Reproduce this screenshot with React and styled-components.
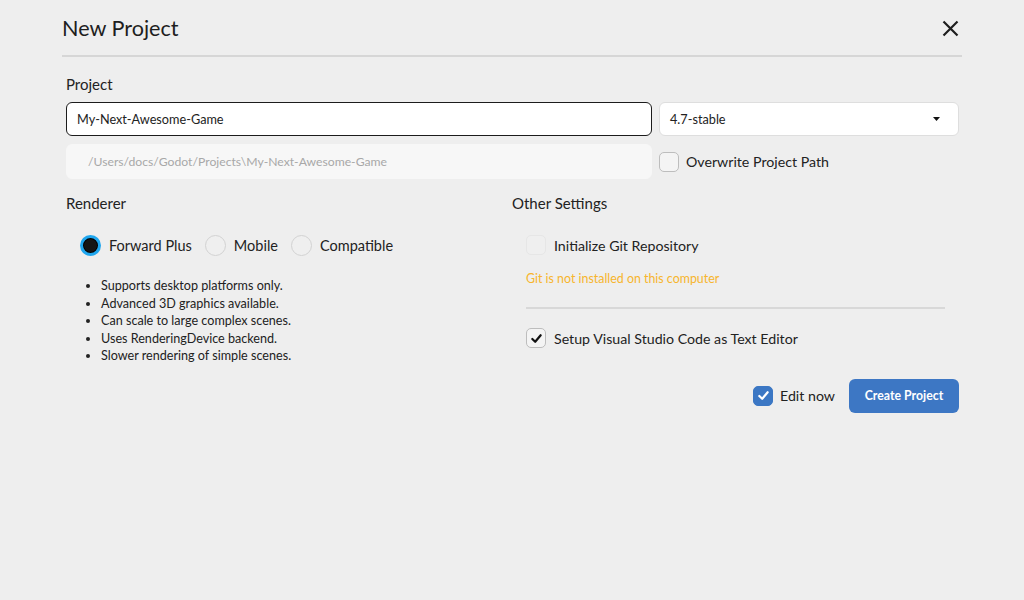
import React from "react";
import styled, { createGlobalStyle } from "styled-components";

const GlobalStyle = createGlobalStyle`
  html, body {
    margin: 0;
    padding: 0;
    background: #eeeeee;
    font-family: Lato, "Noto Sans", sans-serif;
    color: #222;
  }
`;

const Dialog = styled.div`
  width: 900px;
  margin: 0 auto;
  padding: 0 62px;
  height: 600px;
  box-sizing: content-box;
`;

const Header = styled.div`
  height: 55px;
  display: flex;
  align-items: center;
  justify-content: space-between;
  border-bottom: 2px solid #d6d6d6;
`;

const Title = styled.h1`
  margin: 0;
  padding-top: 1px;
  font-size: 21.6px;
  font-weight: 400;
  color: #1e1e1e;
`;

const CloseButton = styled.button`
  border: none;
  background: none;
  padding: 0;
  width: 24px;
  height: 24px;
  margin-top: 2px;
  display: flex;
  align-items: center;
  justify-content: center;
  cursor: pointer;
`;

const Body = styled.div`
  padding: 17px 3px 0 4px;
`;

const Label = styled.div`
  font-size: 15px;
  line-height: 20px;
  color: #222;
`;

const ProjectGrid = styled.div`
  margin-top: 8px;
  display: grid;
  grid-template-columns: 586px 1fr;
  column-gap: 7px;
  row-gap: 8px;
`;

const TextField = styled.div`
  box-sizing: border-box;
  display: flex;
  align-items: center;
  padding: 0 ${(p) => p.$pad || 10}px;
  border-radius: 6px;
  background: ${(p) => (p.$muted ? "#f7f7f7" : "#fff")};
  border: 1px solid ${(p) => (p.$active ? "#1c1c1c" : p.$muted ? "#f7f7f7" : "#dedede")};
  font-size: ${(p) => (p.$muted ? 12.2 : 12.7)}px;
  color: ${(p) => (p.$muted ? "#a8a8a8" : "#222")};
  height: ${(p) => (p.$muted ? 35 : 34)}px;
`;

const Select = styled(TextField)`
  justify-content: space-between;
  padding-right: 18px;
`;

const CheckRow = styled.label`
  display: flex;
  align-items: center;
  gap: ${(p) => p.$gap || 8}px;
  margin-top: ${(p) => p.$mt || 0}px;
  font-size: 14.2px;
  color: #222;
`;

const Box = styled.span`
  width: 20px;
  height: 20px;
  box-sizing: border-box;
  border-radius: 5px;
  display: flex;
  align-items: center;
  justify-content: center;
  border: 1px solid
    ${(p) => (p.$variant === "primary" ? "#3b77c4" : p.$variant === "faint" ? "#e6e6e6" : "#bdbdbd")};
  background: ${(p) => (p.$variant === "primary" ? "#3b77c4" : p.$variant === "faint" ? "#efefef" : "#f4f4f4")};
`;

const Columns = styled.div`
  margin-top: 14px;
  display: grid;
  grid-template-columns: 446px 1fr;
`;

const RadioRow = styled.div`
  margin-top: 20px;
  padding-left: 14px;
  display: flex;
  align-items: center;
  height: 24px;
`;

const RadioItem = styled.label`
  display: flex;
  align-items: center;
  gap: 8px;
  font-size: 14.5px;
  margin-right: 13px;
`;

const RadioDot = styled.span`
  width: 21px;
  height: 21px;
  box-sizing: border-box;
  border-radius: 50%;
  border: ${(p) => (p.$checked ? "3px solid #1fa6ee" : "1px solid #d2d2d2")};
  background: ${(p) => (p.$checked ? "#151515" : "#efefef")};
  box-shadow: ${(p) => (p.$checked ? "inset 0 0 0 1px #000" : "none")};
`;

const Bullets = styled.ul`
  margin: 20px 0 0;
  padding-left: 35px;
  font-size: 12.6px;
  line-height: 17.5px;
  color: #222;
`;

const RightCol = styled.div`
  padding-right: 14px;
`;

const Options = styled.div`
  margin-top: 22px;
  padding-left: 14px;
  display: flex;
  flex-direction: column;
`;

const Warning = styled.div`
  margin-top: 16px;
  font-size: 12.4px;
  line-height: 16px;
  color: #f7b52c;
`;

const Divider = styled.div`
  margin-top: 20px;
  height: 2px;
  background: #d8d8d8;
`;

const Footer = styled.div`
  margin-top: 14px;
  display: flex;
  justify-content: flex-end;
  align-items: center;
  gap: 14px;
`;

const PrimaryButton = styled.button`
  height: 34px;
  width: 110px;
  border: none;
  border-radius: 6px;
  background: #3d77c4;
  color: #fff;
  font-family: inherit;
  font-size: 12.3px;
  font-weight: 700;
  cursor: pointer;
`;

const Check = ({ color = "#111" }) => (
  <svg width="13" height="13" viewBox="0 0 14 14">
    <path d="M2.5 7.5 L5.6 10.5 L11.5 3.5" fill="none" stroke={color} strokeWidth="2.4" strokeLinecap="round" strokeLinejoin="round" />
  </svg>
);

const bullets = [
  "Supports desktop platforms only.",
  "Advanced 3D graphics available.",
  "Can scale to large complex scenes.",
  "Uses RenderingDevice backend.",
  "Slower rendering of simple scenes.",
];

export default function App() {
  return (
    <>
      <GlobalStyle />
      <Dialog>
        <Header>
          <Title>New Project</Title>
          <CloseButton aria-label="Close">
            <svg width="17" height="17" viewBox="0 0 17 17">
              <path d="M1.5 1.5 L15.5 15.5 M15.5 1.5 L1.5 15.5" stroke="#1e1e1e" strokeWidth="2.2" />
            </svg>
          </CloseButton>
        </Header>
        <Body>
          <Label>Project</Label>
          <ProjectGrid>
            <TextField $active>My-Next-Awesome-Game</TextField>
            <Select>
              <span>4.7-stable</span>
              <svg width="7" height="4" viewBox="0 0 7 4">
                <path d="M0 0 H7 L3.5 4 Z" fill="#111" />
              </svg>
            </Select>
            <TextField $muted $pad={21}>/Users/docs/Godot/Projects\My-Next-Awesome-Game</TextField>
            <CheckRow $gap={7}>
              <Box />
              Overwrite Project Path
            </CheckRow>
          </ProjectGrid>

          <Columns>
            <div>
              <Label>Renderer</Label>
              <RadioRow>
                <RadioItem>
                  <RadioDot $checked />
                  Forward Plus
                </RadioItem>
                <RadioItem>
                  <RadioDot />
                  Mobile
                </RadioItem>
                <RadioItem>
                  <RadioDot />
                  Compatible
                </RadioItem>
              </RadioRow>
              <Bullets>
                {bullets.map((b) => (
                  <li key={b}>{b}</li>
                ))}
              </Bullets>
            </div>
            <RightCol>
              <Label>Other Settings</Label>
              <Options>
                <CheckRow>
                  <Box $variant="faint" />
                  Initialize Git Repository
                </CheckRow>
                <Warning>Git is not installed on this computer</Warning>
                <Divider />
                <CheckRow $mt={19}>
                  <Box>
                    <Check />
                  </Box>
                  Setup Visual Studio Code as Text Editor
                </CheckRow>
              </Options>
            </RightCol>
          </Columns>

          <Footer>
            <CheckRow $gap={7}>
              <Box $variant="primary">
                <Check color="#fff" />
              </Box>
              Edit now
            </CheckRow>
            <PrimaryButton>Create Project</PrimaryButton>
          </Footer>
        </Body>
      </Dialog>
    </>
  );
}
